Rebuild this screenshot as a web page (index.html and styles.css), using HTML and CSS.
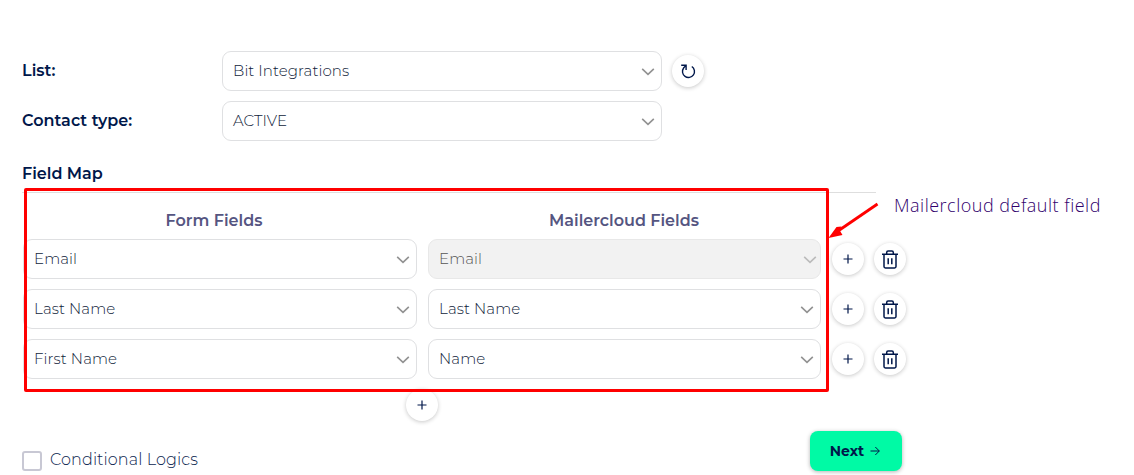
FILE: index.html
```html
<!DOCTYPE html>
<html lang="en">
<head>
<meta charset="utf-8">
<title>Mailercloud field map</title>
<link rel="stylesheet" href="styles.css">
</head>
<body>
<svg class="defs" width="0" height="0" aria-hidden="true">
  <symbol id="chevron" viewBox="0 0 14 10"><path d="M1.2 1.8 7 7.4 12.8 1.8" fill="none" stroke="currentColor" stroke-width="1.6"/></symbol>
  <symbol id="plus" viewBox="0 0 10 10"><path d="M5 .5v9M.5 5h9" fill="none" stroke="currentColor" stroke-width="1.2"/></symbol>
  <symbol id="trash" viewBox="0 0 16 19"><path d="M0 4.3h16M4.7 4V2.4Q4.7 1 6.1 1h3.8q1.4 0 1.4 1.4V4M2 4.5v12q0 1.4 1.4 1.4h9.2q1.4 0 1.4-1.4v-12M6.2 8.3v6M9.8 8.3v6" fill="none" stroke="currentColor" stroke-width="1.5"/></symbol>
</svg>
<main class="page">
  <div class="setting">
    <span class="label">List:</span>
    <div class="select"><span>Bit Integrations</span><svg class="chevron"><use href="#chevron"/></svg></div>
    <button class="round" aria-label="Refresh"><svg width="16" height="16" viewBox="0 0 16 16"><path d="M11.800 3.500A6 6 0 1 1 3.600 5L5.900 2.400M1.200 2.300H6.100V7" fill="none" stroke="currentColor" stroke-width="1.4"/></svg></button>
  </div>
  <div class="setting">
    <span class="label">Contact type:</span>
    <div class="select"><span>ACTIVE</span><svg class="chevron"><use href="#chevron"/></svg></div>
  </div>
  <h2 class="label heading"><span>Field Map</span></h2>
  <section class="map">
    <div class="columns"><span class="form">Form Fields</span><span class="mailer">Mailercloud Fields</span></div>
    <div class="row">
      <div class="select"><span>Email</span><svg class="chevron"><use href="#chevron"/></svg></div>
      <div class="select disabled"><span>Email</span><svg class="chevron"><use href="#chevron"/></svg></div>
      <div class="actions"><button class="round" aria-label="Add"><svg class="plus"><use href="#plus"/></svg></button><button class="round" aria-label="Delete"><svg class="trash"><use href="#trash"/></svg></button></div>
    </div>
    <div class="row">
      <div class="select"><span>Last Name</span><svg class="chevron"><use href="#chevron"/></svg></div>
      <div class="select"><span>Last Name</span><svg class="chevron"><use href="#chevron"/></svg></div>
      <div class="actions"><button class="round" aria-label="Add"><svg class="plus"><use href="#plus"/></svg></button><button class="round" aria-label="Delete"><svg class="trash"><use href="#trash"/></svg></button></div>
    </div>
    <div class="row">
      <div class="select"><span>First Name</span><svg class="chevron"><use href="#chevron"/></svg></div>
      <div class="select"><span>Name</span><svg class="chevron"><use href="#chevron"/></svg></div>
      <div class="actions"><button class="round" aria-label="Add"><svg class="plus"><use href="#plus"/></svg></button><button class="round" aria-label="Delete"><svg class="trash"><use href="#trash"/></svg></button></div>
    </div>
  </section>
  <div class="add-row"><button class="round" aria-label="Add row"><svg class="plus"><use href="#plus"/></svg></button></div>
  <footer class="footer">
    <label class="logic"><span class="box"></span><span>Conditional Logics</span></label>
    <button class="next"><span>Next</span><svg width="10" height="10" viewBox="0 0 10 10"><path d="M.5 5h8.800M5.300 1l4 4-4 4" fill="none" stroke="currentColor" stroke-width="1"/></svg></button>
  </footer>
</main>
<div class="highlight"></div>
<svg class="arrow" width="52" height="40" viewBox="0 0 52 40"><path d="M49.500 2 10 29" stroke="#f00" stroke-width="2.800"/><path d="M.5 36 8.500 25 13.500 24.500 11.500 28 14.500 33Z" fill="#f00"/></svg>
<div class="note">Mailercloud default field</div>
</body>
</html>
```

FILE: styles.css
```css
* { box-sizing: border-box; }
body { margin: 0; background: #fff; color: #101c3a; font: 300 15px/20px Montserrat, Inter, sans-serif; position: relative; width: 1134px; height: 475px; overflow: hidden; }
.defs { position: absolute; }
button { font: inherit; border: 0; padding: 0; }
span { white-space: nowrap; }
.page { padding: 51px 0 0 22px; }
.setting { display: flex; align-items: center; height: 40px; margin-bottom: 10px; }
.label { font-size: 16px; font-weight: 600; color: #00174a; }
.setting .label { width: 200px; letter-spacing: .05px; }
.setting .select { width: 440px; margin-right: 10px; }
.select { display: flex; align-items: center; justify-content: space-between; height: 40px; padding: 0 6px 0 10px; border: 1px solid #dfe0e2; border-radius: 9px; background: #fff; letter-spacing: .1px; }
.chevron { width: 14px; height: 10px; color: #929292; margin-top: 1px; }
.round { width: 32px; height: 32px; border-radius: 50%; background: #fff; color: #00174a; display: flex; align-items: center; justify-content: center; box-shadow: 0 1px 4px rgba(0,0,0,.22); }
.plus { width: 10px; height: 10px; margin-top: -1px; }
.trash { width: 16px; height: 19px; }
.heading { margin: 22px 0 0; height: 30px; line-height: 21px; width: 854px; border-bottom: 1px solid #dedede; }
.map { width: 884px; margin-left: 1px; padding-top: 18px; }
.columns { display: grid; grid-template-columns: 394px 393px; column-gap: 11px; height: 28px; font-size: 16px; font-weight: 600; color: #555581; text-align: center; }
.form { padding-right: 12px; }
.mailer { padding-right: 1px; }
.row { display: grid; grid-template-columns: 394px 393px 74px; column-gap: 11px; align-items: center; height: 40px; margin-bottom: 10px; }
.disabled { background: #f2f2f2; border-color: #e8e8e8; color: #555; padding-right: 3px; }
.disabled .chevron { color: #bbb; }
.actions { display: flex; justify-content: space-between; }
.add-row { padding-left: 384px; height: 42px; }
.footer { display: flex; justify-content: space-between; width: 880px; }
.logic { display: flex; gap: 8px; padding-top: 19px; color: #0c2650; font-size: 16px; letter-spacing: .12px; }
.box { width: 20px; height: 20px; margin-top: 1px; border: 2px solid #c8c8d4; border-radius: 3px; }
.next { width: 92px; height: 40px; border-radius: 8px; background: #00faa5; color: #00174a; display: flex; align-items: center; justify-content: center; gap: 6px; padding-right: 2px; font-size: 14px; font-weight: 700; box-shadow: 0 1px 4px rgba(0,0,0,.3); }
.highlight { position: absolute; left: 24px; top: 188px; width: 805px; height: 204px; border: 3px solid #f00; border-radius: 2px; }
.arrow { position: absolute; left: 828px; top: 202px; }
.note { position: absolute; left: 894px; top: 193px; font: 300 18px/24px "Open Sans", sans-serif; letter-spacing: .5px; color: #30006c; white-space: nowrap; }
```
